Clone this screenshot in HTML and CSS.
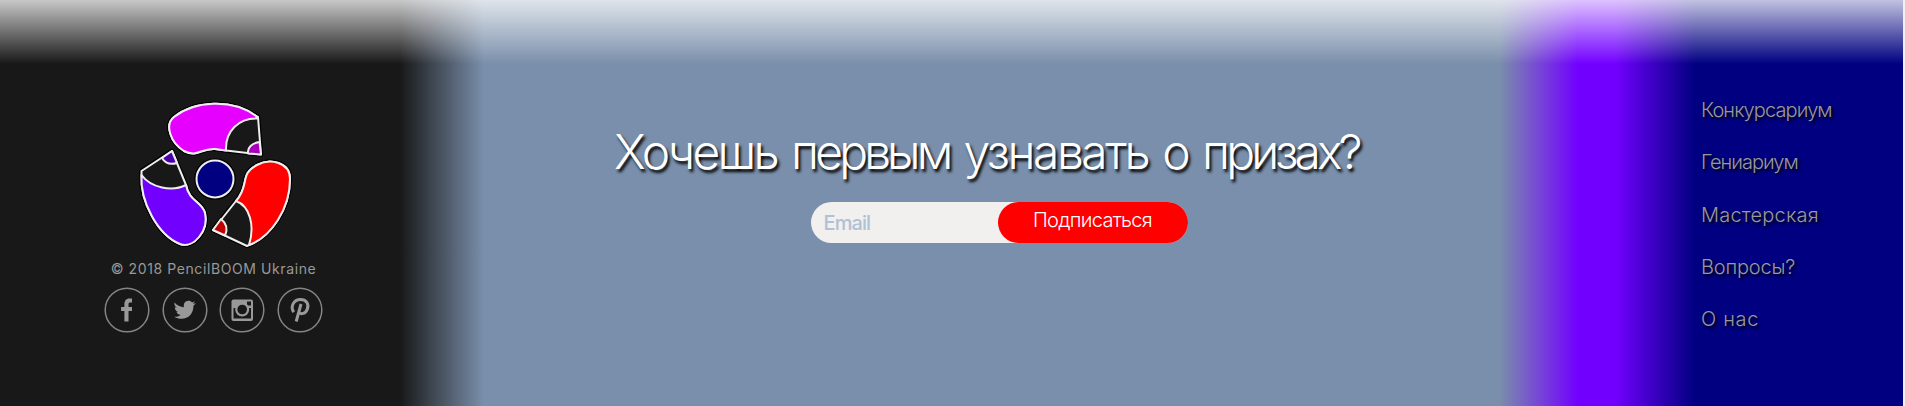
FILE: index.html
```html
<!DOCTYPE html>
<html lang="ru">
<head>
<meta charset="utf-8">
<title>PencilBOOM Ukraine</title>
<link rel="stylesheet" href="styles.css">
</head>
<body>
<footer class="footer">
  <section class="brand">
    <svg class="logo" viewBox="0 0 190 170" width="190" height="170" stroke-linejoin="round">
      <g fill="none" stroke="#000" stroke-width="4.5">
        <path d="M136 27C112 9 74 12 54 28C44 36 51 54 64 62C78 69 80 59 95 60L106 61.500L141 65.500L138 28Z"/>
        <path d="M52 62L21.500 82V86C20 113 38 146 60 155C74 160 89 141 85 124C82 112 69 113 66 96Z"/>
        <path d="M93 141L127 157C151 148 170 120 170 90C170 73 150 69 137 76C119 85 130 97 116 112Z"/>
        <circle cx="95" cy="90" r="18.500"/>
      </g>
      <g stroke="#eee" stroke-width="2" fill="#181818">
        <path d="M136 27C112 9 74 12 54 28C44 36 51 54 64 62C78 69 80 59 95 60L106 61.500L141 65.500L138 28Z"/>
        <path fill="#e600ff" d="M136 27C112 9 74 12 54 28C44 36 51 54 64 62C78 69 80 59 95 60L106 61.500C105 42 119 29 137 29.500Z"/>
        <path fill="#a800b8" d="M139.500 53C132 54 127 59 128 64.500L141 65.500Z"/>
        <path d="M52 62L21.500 82V86C20 113 38 146 60 155C74 160 89 141 85 124C82 112 69 113 66 96Z"/>
        <path fill="#7200ff" d="M21.500 86C20 113 38 146 60 155C74 160 89 141 85 124C82 112 69 113 66 96C52 103 31 99 21.500 86Z"/>
        <path fill="#4c00ac" d="M42 69C45 74 50 76 57 74L52 62Z"/>
        <path d="M93 141L127 157C151 148 170 120 170 90C170 73 150 69 137 76C119 85 130 97 116 112Z"/>
        <path fill="#f00" d="M129 156C151 148 170 120 170 90C170 73 150 69 137 76C119 85 130 97 116 112C130 117 135 137 129 156Z"/>
        <path fill="#c00000" d="M101 130C106 134 108 140 105 146.500L93 141Z"/>
        <circle cx="95" cy="90" r="18.500" fill="#000080"/>
      </g>
    </svg>
    <p class="copyright">© 2018 PencilBOOM Ukraine</p>
    <div class="social">
      <a href="#" aria-label="Facebook"><svg width="46" height="46" viewBox="0 0 46 46"><circle class="ring" cx="23" cy="23" r="21.800"/><path d="M20.400 34.500V24h-3.300v-4h3.300v-2.500c0-4 2-6 5-6H28v4h-1.600c-1.400 0-1.900.6-1.900 1.900V20H28v4h-3.500v10.500z"/></svg></a>
      <a href="#" aria-label="Twitter"><svg width="46" height="46" viewBox="0 0 46 46"><circle class="ring" cx="23" cy="23" r="21.800"/><path transform="translate(-2.300 -2.300) scale(1.100)" d="M13.500 16.200c2.300 2.600 5 4 8.500 4.300-.6-3.200 1.300-5.800 4.200-5.800 1.300 0 2.400.5 3.200 1.400l2.500-1-1.500 2.300 2.500-.6-2.200 2.400c0 7-4.500 11.800-10.700 11.800-2.600 0-5-.7-6.700-1.900 2.300.2 4.300-.4 5.700-1.600-1.900-.2-3.200-1.300-3.800-2.900h1.700c-2-.6-3.200-2.200-3.200-4.200l1.800.5c-1.800-1.400-2.500-3-2-4.700z"/></svg></a>
      <a href="#" aria-label="Instagram"><svg width="46" height="46" viewBox="0 0 46 46"><circle class="ring" cx="23" cy="23" r="21.800"/><rect x="12.500" y="12.500" width="21.500" height="21.500" rx="2"/><path class="hole" d="M14.500 21H32V31.500H14.500zM28 14.500h4v4h-4z"/><circle cx="23.200" cy="22.500" r="7"/><circle class="hole" cx="23.200" cy="22.500" r="4.800"/></svg></a>
      <a href="#" aria-label="Pinterest"><svg width="46" height="46" viewBox="0 0 46 46"><circle class="ring" cx="23" cy="23" r="21.800"/><path class="line" d="M16.800 25.200C13 20 16.500 12.500 23.500 12.500C29.500 12.500 32 17 30.500 21.500C29 27 23.500 28 21.500 24.800M24 17L19.200 34.500"/></svg></a>
    </div>
  </section>
  <section class="subscribe">
    <h2 class="title">Хочешь <span class="tight">первым</span> <span class="wide">узнавать</span> о <span class="tight">призах?</span></h2>
    <form class="form">
      <input class="email" type="email" placeholder="Email">
      <button class="submit" type="button">Подписаться</button>
    </form>
  </section>
  <nav class="links">
    <a class="contests" href="#">Конкурсариум</a>
    <a class="geniuses" href="#">Гениариум</a>
    <a class="workshop" href="#">Мастерская</a>
    <a class="questions" href="#">Вопросы?</a>
    <a class="about" href="#">О нас</a>
  </nav>
</footer>
</body>
</html>
```
FILE: styles.css
```css
* { box-sizing: border-box; }
body { margin: 0; font-family: Inter, "Open Sans", sans-serif; background: #f1f0ee; }
.footer {
  display: flex;
  width: 1903px;
  height: 406px;
  overflow: hidden;
  background:
    linear-gradient(to bottom, rgba(255,255,255,.76), rgba(255,255,255,0) 64px),
    linear-gradient(to right, #181818 400px, #7a8fab 484px, #7a8fab 1499px, #7200ff 1578px, #7200ff 1615px, #000080 1696px);
}
.brand { width: 427px; padding-top: 89px; display: flex; flex-direction: column; align-items: center; }
.logo { display: block; margin-left: 3px; }
.copyright { margin: 0; height: 24px; font-size: 14px; line-height: 19px; letter-spacing: .6px; color: #999; white-space: nowrap; }
.social { display: flex; gap: 11.500px; margin-top: 4px; }
.social a { display: block; height: 46px; fill: #999; }
.social svg { display: block; }
.social .ring { fill: none; stroke: #858585; stroke-width: 1.500; }
.social .hole { fill: #181818; }
.social .line { fill: none; stroke: #999; stroke-width: 3; }
.subscribe { width: 1123px; padding-top: 117px; display: flex; flex-direction: column; align-items: center; }
.title { margin: 0 0 0 -3px; height: 85px; width: 746px; font-size: 48px; line-height: 70px; font-weight: 300; letter-spacing: -2.750px; word-spacing: 3.300px; color: #fff; white-space: nowrap; text-shadow: 2px 3px 3px #000; }
.title .tight { letter-spacing: -3.900px; }
.title .wide { letter-spacing: -2.500px; }
.form { display: flex; width: 377px; height: 41px; margin-left: 21px; border-radius: 21px; background: #f1f0ee; }
.email { width: 187px; height: 41px; border: 0; padding: 0 13px; background: none; font: 500 20px Inter, sans-serif; letter-spacing: -.900px; outline: 0; }
.email::placeholder { color: #b0c0d5; opacity: 1; }
.submit { width: 190px; height: 41px; border: 0; border-radius: 21px; padding: 0 0 5px; background: #f00; color: #fff; font: 300 20px Inter, sans-serif; letter-spacing: -.7px; }
.links { padding: 98px 0 0 151px; display: flex; flex-direction: column; align-items: flex-start; gap: 28.300px; }
.links a { color: #999; font-size: 20px; line-height: 24px; font-weight: 300; text-decoration: none; text-shadow: 2px 2px 3px #000; white-space: nowrap; }
.links .contests { letter-spacing: -.9px; }
.links .geniuses { letter-spacing: -1px; }
.links .workshop { letter-spacing: .2px; }
.links .questions { letter-spacing: -.2px; }
.links .about { letter-spacing: .7px; }
```
